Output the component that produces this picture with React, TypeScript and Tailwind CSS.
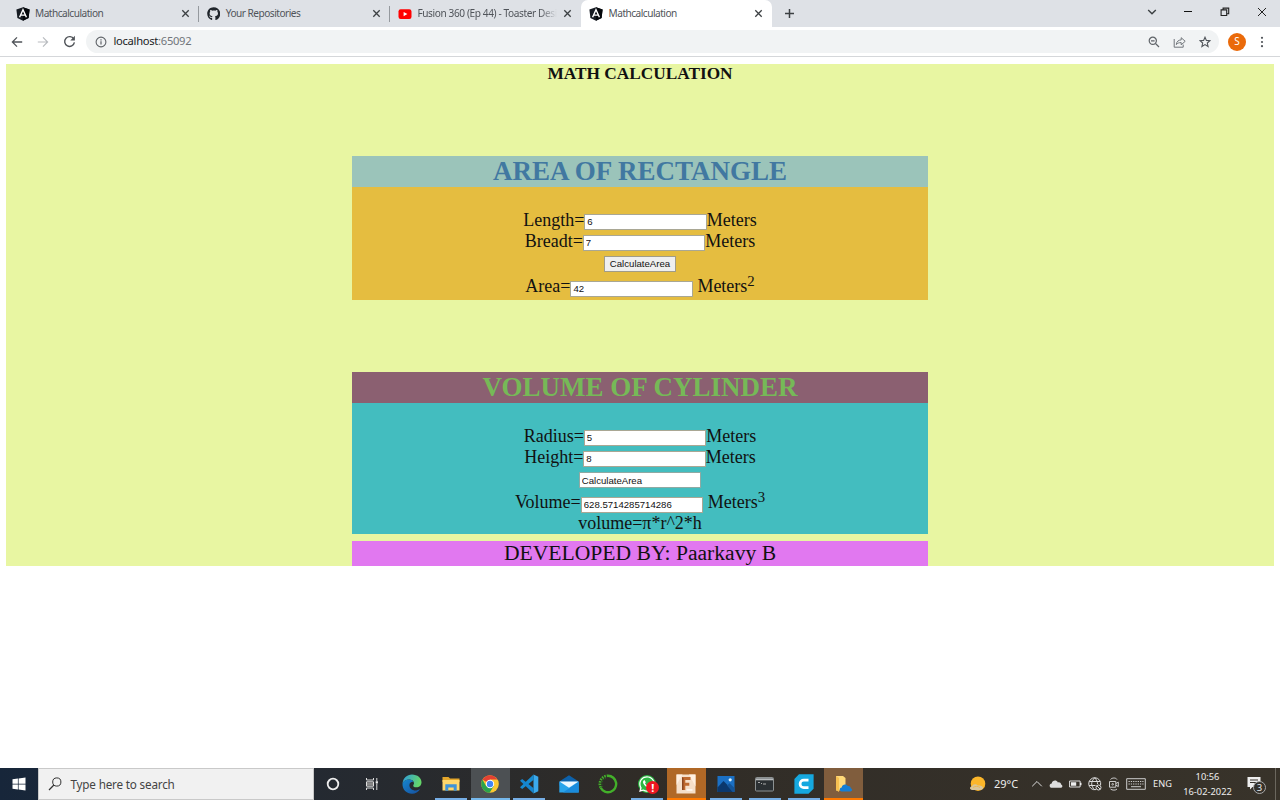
import type { ReactNode } from 'react';
import { FaGithub, FaWhatsapp } from 'react-icons/fa';

function AngularIcon() {
  return (
    <svg width="14" height="14" viewBox="0 0 14 14" className="shrink-0">
      <path d="M7 .3 13.6 2.5 12.6 11 7 13.8 1.4 11 .4 2.5z" fill="#161b22" />
      <path d="M7 .3 13.6 2.5 12.6 11 7 13.8z" fill="#05080c" />
      <path d="M3.6 10.2 7 2.7l3.4 7.5M4.9 8.1h4.2" fill="none" stroke="#fff" strokeWidth="1.4" />
    </svg>
  );
}

function YoutubeIcon() {
  return (
    <svg width="14" height="14" viewBox="0 0 14 14" className="shrink-0">
      <rect x=".5" y="2.3" width="13" height="9.6" rx="2.2" fill="#f00" />
      <path d="m5.6 5 3.8 2.1-3.8 2.1z" fill="#fff" />
    </svg>
  );
}

function Close() {
  return (
    <svg width="9" height="9" viewBox="0 0 9 9" className="shrink-0">
      <path d="m1.3 1.3 6.4 6.4m0-6.4L1.3 7.7" stroke="#3c4043" strokeWidth="1.3" />
    </svg>
  );
}

function Tab({ icon, title, tone, divider, fade }: { icon: ReactNode; title: string; tone: string; divider?: boolean; fade?: boolean }) {
  return (
    <div className={`flex h-[27px] w-[191.2px] shrink-0 items-center pl-[8px] ${tone}`}>
      {icon}
      <span className={`ml-[5.5px] w-[140px] whitespace-nowrap text-[10.1px] text-[#50545a] ${fade ? 'tracking-[-0.39px] mask-r-from-88%' : 'tracking-[-0.5px]'}`}>{title}</span>
      <span className="ml-[6px] flex">
        <Close />
      </span>
      <span className={`ml-[8px] h-[16px] w-px ${divider ? 'bg-[#95999e]' : ''}`} />
    </div>
  );
}

function TabStrip() {
  return (
    <div className="flex h-[27px] bg-[#dee1e6] pl-[7.5px]">
      <Tab icon={<AngularIcon />} title="Mathcalculation" tone="" divider />
      <Tab icon={<FaGithub size={13.5} color="#20252b" className="shrink-0" />} title="Your Repositories" tone="" divider />
      <Tab icon={<YoutubeIcon />} title="Fusion 360 (Ep 44) - Toaster Desi" tone="" fade />
      <Tab icon={<AngularIcon />} title="Mathcalculation" tone="rounded-t-[7px] bg-white" />
      <div className="flex flex-1 items-center pl-[12px]">
        <svg width="11" height="11" viewBox="0 0 11 11">
          <path d="M5.500 1v9M1 5.500h9" stroke="#3c4043" strokeWidth="1.5" />
        </svg>
      </div>
      <div className="mb-[3px] flex w-[147px] items-center">
        <span className="flex w-[37px] justify-center">
          <svg width="10" height="8" viewBox="0 0 10 8"><path d="m1.2 2 3.8 3.8L8.8 2" fill="none" stroke="#3c4043" strokeWidth="1.4" /></svg>
        </span>
        <span className="flex w-[36px] justify-center">
          <svg width="10" height="8" viewBox="0 0 10 8"><path d="M1 3.5h8" stroke="#111" strokeWidth="1" /></svg>
        </span>
        <span className="flex w-[37px] justify-center">
          <svg width="10" height="10" viewBox="0 0 10 10"><path d="M1.1 2.9h5.6v5.6H1.1zM3.1 2.7V1.1h5.6v5.6H7" fill="none" stroke="#222" strokeWidth="1.1" /></svg>
        </span>
        <span className="flex w-[37px] justify-center">
          <svg width="10" height="10" viewBox="0 0 10 10"><path d="m1 1 8 8m0-8L1 9" stroke="#222" strokeWidth="1" /></svg>
        </span>
      </div>
    </div>
  );
}

function AddressBar() {
  return (
    <div className="flex h-[30px] items-center border-b border-[#d5d7da] bg-white">
      <div className="flex w-[86px] items-center gap-[14px] pl-[11px]">
        <svg width="12" height="12" viewBox="0 0 12 12"><path d="M11.2 6H1.500M6 1.400 1.400 6 6 10.600" fill="none" stroke="#505459" strokeWidth="1.3" /></svg>
        <svg width="12" height="12" viewBox="0 0 12 12"><path d="M.8 6h9.700M6 1.400 10.600 6 6 10.600" fill="none" stroke="#b9bcc0" strokeWidth="1.2" /></svg>
        <svg width="13" height="13" viewBox="0 0 13 13">
          <path d="M10.8 4A4.9 4.9 0 1 0 11.4 7.4" fill="none" stroke="#505459" strokeWidth="1.4" />
          <path d="M11.9.8v4.6H7.300z" fill="#505459" />
        </svg>
      </div>
      <div className="flex h-[23px] w-[1133px] items-center rounded-full bg-[#f1f3f4] pl-[9px] pr-[8px]">
        <svg width="12" height="12" viewBox="0 0 12 12">
          <circle cx="6" cy="6" r="4.9" fill="none" stroke="#5f6368" strokeWidth="1.1" />
          <path d="M6 5.300v3.300M6 3.200v1.200" stroke="#5f6368" strokeWidth="1.2" />
        </svg>
        <span className="ml-[6.5px] flex-1 text-[11.2px] tracking-[-0.3px] text-[#70757a]">
          <span className="text-[#202124]">localhost</span>:65092
        </span>
        <div className="flex items-center gap-[13px]">
          <svg width="12" height="12" viewBox="0 0 12 12">
            <circle cx="4.8" cy="4.8" r="3.6" fill="none" stroke="#5f6368" strokeWidth="1.2" />
            <path d="M7.500 7.500 11 11M3 4.800h3.600" stroke="#5f6368" strokeWidth="1.2" />
          </svg>
          <svg width="13" height="12" viewBox="0 0 13 12">
            <path d="M1.200 3v8.200h9V8.600" fill="none" stroke="#70757a" strokeWidth="1" />
            <path d="M3.300 8.600C3.600 5.400 5.500 4 8.200 3.900V1.700l4 3.600-4 3.500V6.600C6 6.500 4.600 7.100 3.300 8.600z" fill="none" stroke="#70757a" strokeWidth="1" strokeLinejoin="round" />
          </svg>
          <svg width="12" height="12" viewBox="0 0 12 12">
            <path d="m6 1.200 1.400 3.200 3.500.3-2.600 2.300.8 3.500L6 8.600l-3.100 1.900.8-3.500L1.100 4.700l3.500-.3z" fill="none" stroke="#50545a" strokeWidth="1.1" />
          </svg>
        </div>
      </div>
      <span className="ml-[9px] flex size-[18px] items-center justify-center rounded-full bg-[#ea6a0a] text-[10px] text-white">S</span>
      <svg width="4" height="12" viewBox="0 0 4 12" className="ml-[14px]" fill="#505459">
        <circle cx="2" cy="1.800" r="1.100" /><circle cx="2" cy="6" r="1.100" /><circle cx="2" cy="10.200" r="1.100" />
      </svg>
    </div>
  );
}

function Field({ label, value, unit, power }: { label: string; value: string; unit: string; power?: string }) {
  return (
    <label className="flex h-[21px] justify-center text-[18px] leading-[20px] whitespace-pre">
      {label}=
      <input
        defaultValue={value}
        className={`h-[16px] w-[122.5px] border border-[#a9a794] bg-white px-[2px] font-['Liberation_Sans',Arial,sans-serif] text-[9.6px] text-[#111] ${power ? 'mt-[5px]' : 'mt-[4px]'}`}
      />
      {unit}
      {power && <span className="-mt-[5px] text-[14.8px]">{power}</span>}
    </label>
  );
}

function Calculator() {
  return (
    <main className="flex-1 bg-white px-[5.6px] pt-[7px] font-['Liberation_Serif','Times_New_Roman',serif] text-[#111]">
      <div className="h-[502px] bg-[#e8f6a2]">
        <h1 className="h-[92px] text-center text-[17.3px] leading-[20px] font-bold">MATH CALCULATION</h1>
        <section className="mx-auto h-[144px] w-[576px] bg-[#e5bd40]">
          <h2 className="h-[31px] bg-[#9bc4ba] text-center text-[27px] leading-[31px] font-bold text-[#4178a1]">AREA OF RECTANGLE</h2>
          <div className="pt-[23px]">
            <Field label="Length" value="6" unit="Meters" />
            <Field label="Breadt" value="7" unit="Meters" />
            <div className="flex h-[24px] justify-center pt-[4px]">
              <button className="h-[16px] w-[72px] border border-[#a09c88] bg-[#efefef] font-['Liberation_Sans',Arial,sans-serif] text-[9.6px] leading-[14px] text-[#111]">CalculateArea</button>
            </div>
            <Field label="Area" value="42" unit=" Meters" power="2" />
          </div>
        </section>
        <section className="mx-auto mt-[72px] h-[162px] w-[576px] bg-[#43bdbf]">
          <h2 className="h-[31px] bg-[#8b6071] text-center text-[27px] leading-[31px] font-bold text-[#76b957]">VOLUME OF CYLINDER</h2>
          <div className="pt-[23px]">
            <Field label="Radius" value="5" unit="Meters" />
            <Field label="Height" value="8" unit="Meters" />
            <div className="flex h-[24px] justify-center pt-[4px]">
              <input defaultValue="CalculateArea" className="h-[16px] w-[122.5px] border border-[#8fa9a3] bg-white px-[2px] font-['Liberation_Sans',Arial,sans-serif] text-[9.6px] text-[#111]" />
            </div>
            <Field label="Volume" value="628.5714285714286" unit=" Meters" power="3" />
            <p className="text-center text-[18px] leading-[21px]">volume=π*r^2*h</p>
          </div>
        </section>
        <footer className="mx-auto mt-[7px] h-[25px] w-[576px] bg-[#e178f0] text-center text-[21.6px] leading-[25px]">DEVELOPED BY: Paarkavy B</footer>
      </div>
    </main>
  );
}

function TaskItem({ children, tone = '', line = '' }: { children: ReactNode; tone?: string; line?: string }) {
  return (
    <div className={`flex h-[32px] w-[39.25px] shrink-0 flex-col items-center ${tone}`}>
      <div className="flex h-[30px] items-center pt-[2px]">{children}</div>
      <div className={`h-[2px] ${line}`} />
    </div>
  );
}

const open = 'w-[32px] bg-[#76aee5]';

function Apps() {
  return (
    <>
      <TaskItem>
        <svg width="14" height="14" viewBox="0 0 14 14"><circle cx="7" cy="7" r="5.3" fill="none" stroke="#eee" strokeWidth="1.8" /></svg>
      </TaskItem>
      <TaskItem>
        <svg width="14" height="14" viewBox="0 0 14 14" fill="none" stroke="#ddd" strokeWidth="1">
          <path d="M1.500 1v2h7V1M1.500 13v-2h7v2M1.500 4.800h7v4.400h-7zM11.800 1v3M11.800 6.500V13" />
          <path d="M2 5.300h6v3.400H2z" fill="#888" stroke="none" />
          <path d="M10.700 4.200h2.200v2.200h-2.200z" fill="#eee" stroke="none" />
        </svg>
      </TaskItem>
      <TaskItem>
        <svg width="20" height="20" viewBox="0 0 20 20">
          <defs>
            <linearGradient id="edgeTop" x1="0" x2="1" y1="0" y2=".3"><stop stopColor="#2c9be0" /><stop offset="1" stopColor="#64d66a" /></linearGradient>
            <linearGradient id="edgeLow" x1="0" x2="1" y1="0" y2="1"><stop stopColor="#1686cf" /><stop offset="1" stopColor="#164f9d" /></linearGradient>
          </defs>
          <path d="M.5 9.500C1 4 5 .4 10 .4c5.500 0 9.500 3.600 9.500 7.900 0 3-2.100 5-5.100 5-2.500 0-3.500-1-3.100-2.100.5-1 .9-1.400.6-2.500-.4-2-2.300-3.200-4.800-3.200C4.200 5.500 1.700 7 .5 9.500z" fill="url(#edgeTop)" />
          <path d="M.5 9.500c1.200-2.500 3.500-3.900 6.300-3.900 2.300 0 4 .8 4.600 2.100C9 7.500 7.400 9 7.400 11.200c0 3.400 3.300 5.600 6.900 5.200 1.600-.2 2.900-.8 3.900-1.300-1.800 3.100-4.900 4.700-8.200 4.700-5.400 0-9.800-4.300-9.500-10.300z" fill="url(#edgeLow)" />
        </svg>
      </TaskItem>
      <TaskItem line={open}>
        <svg width="18" height="16" viewBox="0 0 18 16">
          <path d="M.5 1h6l1.500 1.500h9.500V6H.500z" fill="#e5a72b" />
          <path d="M.5 4h17v10.500H.500z" fill="#ffd76b" />
          <path d="M3.300 14.800V8.200h11.400v6.600h-3v-3.300H6.300v3.300z" fill="#3f93d7" />
        </svg>
      </TaskItem>
      <TaskItem tone="bg-[#4c5053]" line="w-full bg-[#76b9ed]">
        <svg width="18" height="18" viewBox="0 0 18 18">
          <circle cx="9" cy="9" r="8.800" fill="#fbc831" />
          <path d="M9 9 1.400 4.600A8.800 8.800 0 0 1 16.600 4.600H9z" fill="#e34133" />
          <path d="M1.400 4.600A8.800 8.800 0 0 0 8.600 17.800L12.800 11 9 9l-3.800 2.200z" fill="#2ba24c" />
          <circle cx="9" cy="9" r="4.200" fill="#fff" /><circle cx="9" cy="9" r="3.200" fill="#4285f4" />
        </svg>
      </TaskItem>
      <TaskItem line={open}>
        <svg width="20" height="20" viewBox="0 0 20 20">
          <path d="M14.500.5 19.300 2.800v14.400l-4.800 2.300z" fill="#3ba9ec" />
          <path d="m14.500.5.2 5.200L3.200 15 1 13.300z" fill="#168bd0" />
          <path d="m1 6.700 2.200-1.700 11.500 9.300-.2 5.200z" fill="#1585cf" />
        </svg>
      </TaskItem>
      <TaskItem>
        <svg width="20" height="18" viewBox="0 0 20 18">
          <path d="M.3 6.500 10 .2 19.700 6.500v4H.3z" fill="#0d61aa" />
          <path d="M.3 6.800h19.400v10.700H.3z" fill="#2ba4ea" />
          <path d="m4 17.500 15.700-10.700v10.700z" fill="#1a8bdc" />
          <path d="M.5 6.500h19L10 12.800z" fill="#eef8ff" />
        </svg>
      </TaskItem>
      <TaskItem>
        <svg width="20" height="20" viewBox="0 0 20 20" fill="none">
          <path d="M10 1.800a8.200 8.200 0 1 1-7.300 12" stroke="#43b02a" strokeWidth="2.400" />
          <path d="M2.600 13.500A8.200 8.200 0 0 1 10 1.800" stroke="#43b02a" strokeWidth="2.600" strokeDasharray="1.500 1" />
          <path d="M4.500 13A6.600 6.600 0 0 1 9 3.700" stroke="#277a22" strokeWidth="1" strokeDasharray="1 1.400" />
        </svg>
      </TaskItem>
      <TaskItem line={open}>
        <div className="relative flex size-[18px] items-center justify-center rounded-full bg-[#2cb742]">
          <FaWhatsapp size={18} color="#fff" />
          <span className="absolute top-[6px] left-[8px] flex size-[13px] items-center justify-center rounded-full bg-[#ed1720] text-[11px] leading-none font-bold text-white">!</span>
        </div>
      </TaskItem>
      <TaskItem tone="bg-[#b06826]" line="w-full bg-[#ff7900]">
        <svg width="20" height="20" viewBox="0 0 20 20">
          <path d="M.5.500h19v19H.500z" fill="#f5dfc9" />
          <path d="M.5.500h6L.500 11zM13 .500h6.500v12z" fill="#fff0e0" />
          <path d="M6 3h8.500v3H9.300v2.800h4v3h-4V16H6z" fill="#be692e" />
          <path d="M6 3 7.500 4.500V16H6z" fill="#8b461f" />
          <path d="M10.500 16h6" stroke="#fff" strokeWidth="1.300" />
        </svg>
      </TaskItem>
      <TaskItem line={open}>
        <svg width="18" height="18" viewBox="0 0 18 18">
          <path d="M.5 1h17v16H.500z" fill="#1b70c4" /><path d="M.5 12.500 6.500 6l11 11H.500z" fill="#0b386d" />
          <path d="m10 10.500 2.500-2.300 5 4.800v4h-2z" fill="#145498" /><circle cx="13.200" cy="4.800" r="1.600" fill="#d9f1ff" />
        </svg>
      </TaskItem>
      <TaskItem line={open}>
        <svg width="19" height="15" viewBox="0 0 19 15">
          <rect x=".5" y=".5" width="18" height="13.500" rx="1" fill="#2b3033" stroke="#8c9192" />
          <path d="M1 1.300h17v2H1z" fill="#b7bbbd" /><path d="M3 5.500h2M6 6.500h1M8 7h3" stroke="#aaa" />
        </svg>
      </TaskItem>
      <TaskItem line={open}>
        <svg width="20" height="20" viewBox="0 0 20 20">
          <path d="M5 .3h14.600v14.500L14.500 19.700H.4V5z" fill="#16a8df" />
          <path d="M14.500 6.200H9.800a3.700 3.700 0 0 0 0 7.500h4.700" fill="none" stroke="#fff" strokeWidth="2.700" />
        </svg>
      </TaskItem>
      <TaskItem tone="bg-[#805d3d]" line="w-full bg-[#ff7900]">
        <svg width="18" height="18" viewBox="0 0 18 18">
          <path d="M2 1h7l2.500 2v12.500H2z" fill="#ffd979" /><path d="m2 1 3 2v14l-3-2z" fill="#f7c052" />
          <path d="M7.500 16.500c-2.200-.2-2.600-3.500.2-4.100.6-3.200 4.500-3.700 6-1.300 2.300-.2 3 .9 3 2.200 2.300.8 1.300 3.200-.2 3.200z" fill="#147ed4" />
        </svg>
      </TaskItem>
    </>
  );
}

function Tray() {
  return (
    <div className="ml-auto flex h-full w-[312px] items-center text-[#eee]">
      <span className="flex w-[20px] justify-center">
        <svg width="18" height="18" viewBox="0 0 18 18">
          <circle cx="9" cy="8.700" r="7.300" fill="#fbb62a" />
          <path d="M3.200 15C.300 14.800.300 11.600 3 11.300c.700-2.400 4.200-2.800 5.700-.7 2.900-.6 5.300.3 5.300 2.200 0 1.500-1.200 2.200-2.700 2.200z" fill="#d9c69b" />
          <path d="M4 12.500c2-1.500 5-1.500 7 0" stroke="#edb952" fill="none" />
        </svg>
      </span>
      <span className="w-[36px] text-center text-[11px] whitespace-nowrap">29°C</span>
      <span className="ml-[3px] flex w-[19px] justify-center">
        <svg width="12" height="8" viewBox="0 0 12 8"><path d="m1.200 6.300 4.800-4.800 4.800 4.800" fill="none" stroke="#ddd" strokeWidth="1" /></svg>
      </span>
      <span className="flex w-[20px] justify-center">
        <svg width="14" height="10" viewBox="0 0 14 10"><path d="M3 8.800C0 8.700-.200 5 2.700 4.400c.700-3.300 4.800-3.700 6.200-1 2.600-.3 3.100.9 3.200 2.200 2 .7 1.600 3.200-.6 3.200z" fill="#ddd" /></svg>
      </span>
      <span className="flex w-[19px] justify-center">
        <svg width="13" height="10" viewBox="0 0 13 10"><path d="M.600 2h10.500v6H.600z" fill="none" stroke="#ddd" /><path d="M2 3.300h5.200v3.400H2zM11 3.800h1.500v2.400H11z" fill="#eee" /></svg>
      </span>
      <span className="flex w-[19px] justify-center">
        <svg width="14" height="14" viewBox="0 0 14 14" fill="none" stroke="#ddd" strokeWidth="1">
          <path d="M8 12.600A6 6 0 1 1 12.600 8M6.700.800c-4 4-4 8 0 12M6.700.800C8.800 2.900 9.600 5 9.500 7M1.200 4.500h10.900M1 8.500h6.500" />
          <circle cx="10.500" cy="10.500" r="2.500" /><path d="m8.800 8.800 3.400 3.400" />
        </svg>
      </span>
      <span className="flex w-[19px] justify-center">
        <svg width="12" height="14" viewBox="0 0 12 14" fill="none" stroke="#ccc">
          <path d="M2.500 2.500C4 .500 8 .500 9 2.500M2.500 12C4 13.500 8 13.500 9 12M1.500 4.500h6.300v5.700H1.500zM8 6.500l2.300-1.400v4.500L8 8.200" /><circle cx="4.700" cy="7.300" r=".8" />
        </svg>
      </span>
      <span className="flex w-[26px] justify-center">
        <svg width="20" height="12" viewBox="0 0 20 12" fill="none" stroke="#ccc">
          <path d="M.7.700h18.600v10.600H.700z" /><path d="M2.500 3.500h15M2.500 6h15" strokeDasharray="1.300 1" /><path d="M5 8.700h10" />
        </svg>
      </span>
      <span className="w-[27px] text-center text-[9.200px]">ENG</span>
      <span className="flex w-[63px] flex-col pt-[1px] text-center text-[9.300px] leading-[14.500px]"><span>10:56</span><span>16-02-2022</span></span>
      <span className="flex w-[32px] justify-center">
        <span className="relative flex size-[20px]">
          <svg width="20" height="20" viewBox="0 0 20 20"><path d="M2.500 3h13v10H7.500L5 15.500V13H2.500z" fill="#eee" /><path d="M5 6h8M5 8.500h8" stroke="#36312a" /></svg>
          <span className="absolute top-[7px] left-[8px] flex size-[13px] items-center justify-center rounded-full border border-[#aaa] bg-[#34312b] text-[9.500px] leading-none">3</span>
        </span>
      </span>
      <span className="ml-[4px] h-full w-px bg-[#6b675e]" />
    </div>
  );
}

export default function App() {
  return (
    <div className="flex h-[800px] w-[1280px] flex-col overflow-hidden bg-white font-['Noto_Sans','Open_Sans',sans-serif]">
      <TabStrip />
      <AddressBar />
      <Calculator />
      <div className="flex h-[32px] shrink-0 items-center bg-linear-to-r from-[#17263a] via-[#302c27] to-[#38332a]">
        <div className="flex w-[38px] justify-center">
          <svg width="14" height="14" viewBox="0 0 14 14" fill="#fff"><path d="m.5 2.300 5.400-.8v5.200H.500zM6.600 1.400 13.500.400v6.300H6.600zM.5 7.400h5.400v5.100l-5.400-.8zM6.600 7.400h6.900v6.200l-6.900-1z" /></svg>
        </div>
        <div className="flex h-[32px] w-[275.600px] items-center border border-[#c9c9c9] bg-[#f1f1f1] pl-[9px]">
          <svg width="14" height="14" viewBox="0 0 14 14" fill="none" stroke="#333"><circle cx="8.800" cy="5" r="4.100" /><path d="M5.900 8 1 13" strokeWidth="1.200" /></svg>
          <span className="ml-[8.500px] pt-[2px] text-[11.700px] tracking-[-0.180px] text-[#444]">Type here to search</span>
        </div>
        <Apps />
        <Tray />
      </div>
    </div>
  );
}
